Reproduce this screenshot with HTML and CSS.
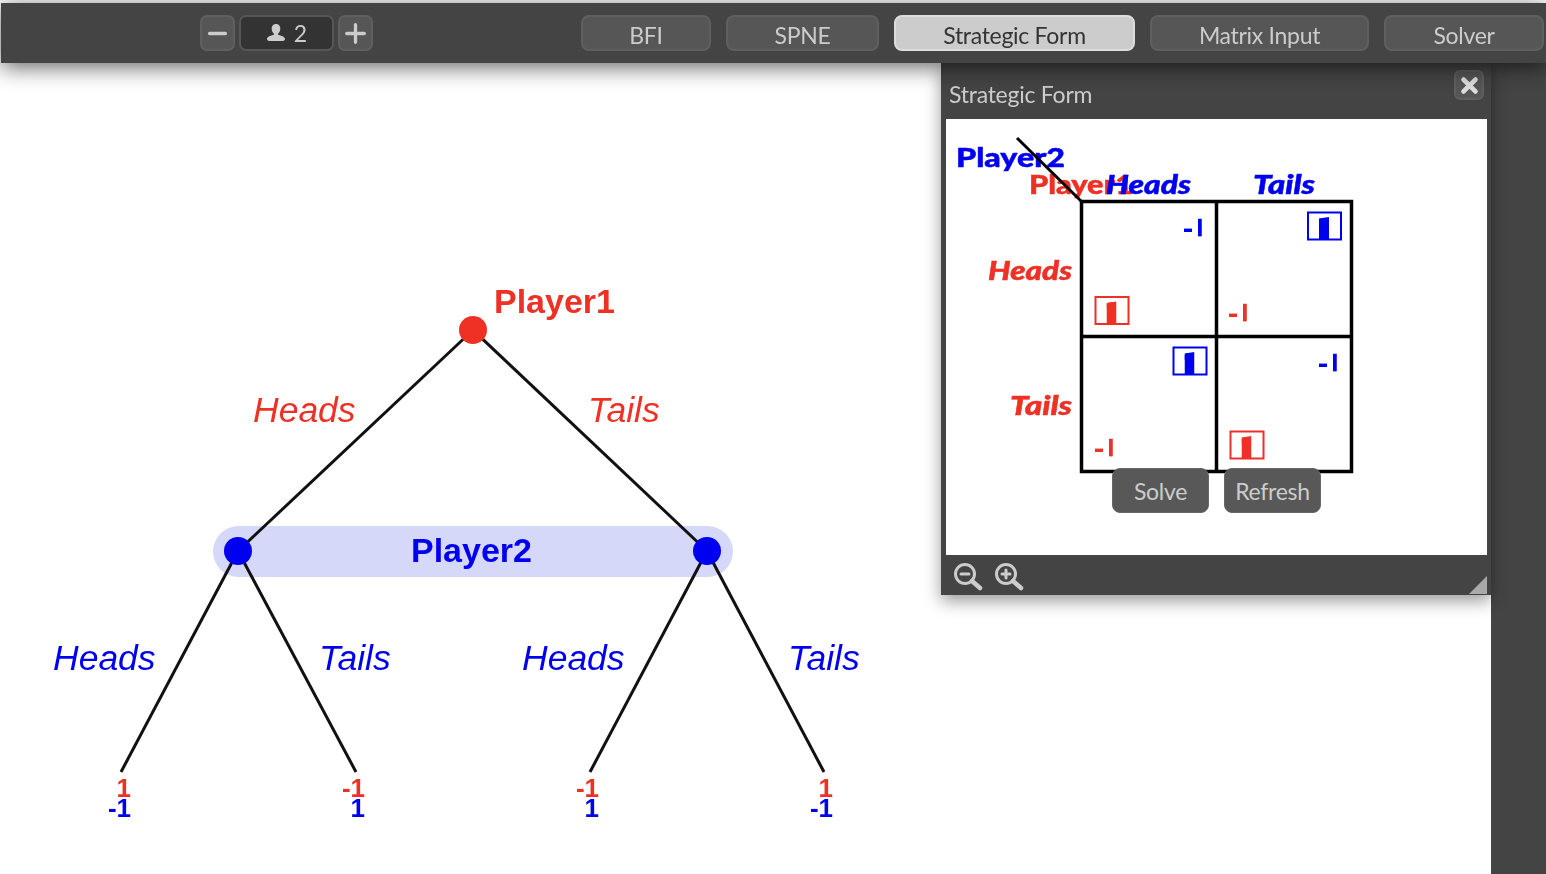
FILE: index.html
```html
<!DOCTYPE html>
<html lang="en">
<head>
<meta charset="utf-8">
<title>Strategic Form</title>
<link rel="stylesheet" href="styles.css">
</head>
<body>
<div class="app">
  <header class="toolbar">
    <div class="stepper">
      <button class="step"><svg class="step-icon" viewBox="0 0 24 24"><path d="M3 12h18" /></svg></button>
      <div class="count">
        <svg class="user-icon" viewBox="0 0 20 20"><path d="M10 1c3 0 4.300 2.300 4.300 4.700 0 2-.9 3.800-2.200 4.800v1.300c2.600.8 6.900 1.800 6.900 4.200 0 1.500-1.500 2-3 2H4c-1.500 0-3-.5-3-2 0-2.400 4.300-3.400 6.900-4.200v-1.300C6.600 9.500 5.700 7.700 5.700 5.700 5.700 3.300 7 1 10 1z"/></svg>
        <span>2</span>
      </div>
      <button class="step"><svg class="step-icon" viewBox="0 0 24 24"><path d="M2 12h20M12 2v20" /></svg></button>
    </div>
    <nav class="tabs">
      <button class="tab tab-bfi">BFI</button>
      <button class="tab tab-spne">SPNE</button>
      <button class="tab tab-form active">Strategic Form</button>
      <button class="tab tab-matrix">Matrix Input</button>
      <button class="tab tab-solver">Solver</button>
    </nav>
  </header>

  <main class="main">
    <section class="canvas">
      <svg class="tree" viewBox="0 63 1491 811">
        <rect class="info-set" x="213" y="526" width="520" height="51" rx="25.500"/>
        <g class="edges">
          <line x1="473" y1="330" x2="238" y2="551"/>
          <line x1="473" y1="330" x2="707" y2="551"/>
          <line x1="238" y1="551" x2="121" y2="772"/>
          <line x1="238" y1="551" x2="356" y2="772"/>
          <line x1="707" y1="551" x2="590" y2="772"/>
          <line x1="707" y1="551" x2="824" y2="772"/>
        </g>
        <circle class="fill-red" cx="473" cy="330" r="14"/>
        <circle class="fill-blue" cx="238" cy="551" r="14"/>
        <circle class="fill-blue" cx="707" cy="551" r="14"/>
        <text class="player fill-red" x="494" y="313">Player1</text>
        <text class="player fill-blue" x="411" y="562">Player2</text>
        <text class="move fill-red" x="253" y="421.500">Heads</text>
        <text class="move fill-red" x="588" y="421.500">Tails</text>
        <text class="move fill-blue" x="53" y="669.500">Heads</text>
        <text class="move fill-blue" x="319" y="669.500">Tails</text>
        <text class="move fill-blue" x="522" y="669.500">Heads</text>
        <text class="move fill-blue" x="788" y="669.500">Tails</text>
        <text class="payoff fill-red" x="131" y="797">1</text>
        <text class="payoff fill-blue" x="131" y="817">-1</text>
        <text class="payoff fill-red" x="365" y="797">-1</text>
        <text class="payoff fill-blue" x="365" y="817">1</text>
        <text class="payoff fill-red" x="599" y="797">-1</text>
        <text class="payoff fill-blue" x="599" y="817">1</text>
        <text class="payoff fill-red" x="833" y="797">1</text>
        <text class="payoff fill-blue" x="833" y="817">-1</text>
      </svg>
    </section>
    <aside class="sidebar"></aside>

    <section class="window">
      <div class="win-head">
        <h2 class="win-title">Strategic Form</h2>
        <button class="win-close"><svg viewBox="0 0 16 16"><path d="M3 3l10 10M13 3L3 13"/></svg></button>
      </div>
      <div class="win-body">
        <svg class="matrix" viewBox="946 119 541 436">
          <defs>
            <clipPath id="clip-pay"><rect x="0" y="-8" width="8" height="4"/><rect x="14" y="-18" width="4" height="18"/></clipPath>
            <clipPath id="clip-best"><polygon points="12,7 22,5.500 22,28 12,28"/></clipPath>
          </defs>
          <text class="m-player fill-blue stroke-blue" x="956" y="167" textLength="109" lengthAdjust="spacingAndGlyphs">Player2</text>
          <text class="m-player fill-red stroke-red" x="1029" y="194" textLength="104" lengthAdjust="spacingAndGlyphs">Player1</text>
          <g class="grid">
            <rect x="1081.500" y="201.500" width="270" height="270"/>
            <line x1="1216.500" y1="201" x2="1216.500" y2="472"/>
            <line x1="1081" y1="336.500" x2="1352" y2="336.500"/>
            <line class="diag" x1="1017" y1="138" x2="1081" y2="201"/>
          </g>
          <text class="m-move fill-blue stroke-blue" x="1106" y="194" textLength="85" lengthAdjust="spacingAndGlyphs">Heads</text>
          <text class="m-move fill-blue stroke-blue" x="1253" y="194" textLength="62" lengthAdjust="spacingAndGlyphs">Tails</text>
          <text class="m-move fill-red stroke-red" x="988" y="280" textLength="84" lengthAdjust="spacingAndGlyphs">Heads</text>
          <text class="m-move fill-red stroke-red" x="1010" y="415" textLength="62" lengthAdjust="spacingAndGlyphs">Tails</text>

          <g transform="translate(1184 236.500)"><text class="m-pay fill-blue stroke-blue" clip-path="url(#clip-pay)">-1</text></g>
          <g transform="translate(1229 321.500)"><text class="m-pay fill-red stroke-red" clip-path="url(#clip-pay)">-1</text></g>
          <g transform="translate(1095 456.500)"><text class="m-pay fill-red stroke-red" clip-path="url(#clip-pay)">-1</text></g>
          <g transform="translate(1319 371.500)"><text class="m-pay fill-blue stroke-blue" clip-path="url(#clip-pay)">-1</text></g>

          <g transform="translate(1307 211.500)"><rect class="box-blue" x="1" y="1" width="33" height="27"/><text class="m-best fill-blue stroke-blue" x="6" y="28" clip-path="url(#clip-best)">1</text></g>
          <g transform="translate(1094.500 296)"><rect class="box-red" x="1" y="1" width="33" height="27"/><text class="m-best fill-red stroke-red" x="6" y="28" clip-path="url(#clip-best)">1</text></g>
          <g transform="translate(1172.500 346.500)"><rect class="box-blue" x="1" y="1" width="33" height="27"/><text class="m-best fill-blue stroke-blue" x="6" y="28" clip-path="url(#clip-best)">1</text></g>
          <g transform="translate(1229.500 430.500)"><rect class="box-red" x="1" y="1" width="33" height="27"/><text class="m-best fill-red stroke-red" x="6" y="28" clip-path="url(#clip-best)">1</text></g>
        </svg>
        <button class="action action-solve">Solve</button>
        <button class="action action-refresh">Refresh</button>
      </div>
      <div class="win-foot">
        <svg class="zoom-icon" viewBox="0 0 30 30"><circle cx="12" cy="12" r="9.500"/><path class="zoom-mark" d="M8 12h8"/><path class="zoom-handle" d="M19 19l8 7"/></svg>
        <svg class="zoom-icon" viewBox="0 0 30 30"><circle cx="12" cy="12" r="9.500"/><path class="zoom-mark" d="M8 12h8M12 8v8"/><path class="zoom-handle" d="M19 19l8 7"/></svg>
        <div class="resize-grip"></div>
      </div>
    </section>
  </main>
</div>
</body>
</html>
```

FILE: styles.css
```css
* { box-sizing: border-box; }
html, body { margin: 0; height: 100%; background: #fff; overflow: hidden; }
.app { height: 874px; display: flex; flex-direction: column; padding-top: 3px; font-family: Lato, "Open Sans", sans-serif; filter: blur(.35px); }
button { font-family: inherit; padding: 0; cursor: pointer; }

.toolbar {
  height: 60px; margin-left: 1px; background: #444; display: flex; align-items: center;
  padding-left: 199px; position: relative; z-index: 3; flex: none;
  box-shadow: 0 4px 22px rgba(0,0,0,.62);
}
.stepper { display: flex; gap: 4px; }
.step {
  width: 35px; height: 36px; border: 2px solid #5f5f5f; border-radius: 7px; background: #565656;
  display: flex; align-items: center; justify-content: center;
}
.step-icon { width: 21px; height: 21px; fill: none; stroke: #ccc; stroke-width: 3.800; stroke-linecap: round; }
.count {
  width: 95px; height: 36px; border: 2px solid #565656; border-radius: 7px; background: #333;
  color: #ccc; display: flex; align-items: center; justify-content: center; gap: 8px; font-size: 23px;
}
.user-icon { width: 20px; height: 20px; fill: #ccc; }

.tabs { display: flex; gap: 15px; margin-left: 208px; }
.tab {
  height: 36px; border: 2px solid #5f5f5f; border-radius: 8px; background: #565656; color: #ccc;
  font-size: 23px; letter-spacing: -.3px; padding-top: 4px; line-height: 28px;
}
.tab.active { background: #ccc; color: #333; border-color: #ddd; }
.tab-bfi { width: 130px; }
.tab-spne { width: 153px; }
.tab-form { width: 241px; }
.tab-matrix { width: 219px; }
.tab-solver { width: 160px; }

.main { flex: 1; display: flex; position: relative; min-height: 0; }
.canvas { flex: 1; min-width: 0; }
.tree { display: block; width: 1491px; height: 811px; }
.sidebar { width: 55px; background: #444; }

.info-set { fill: #d6d8f9; }
.edges line { stroke: #111; stroke-width: 3; }
.fill-red { fill: #ee3124; }
.fill-blue { fill: #0000f0; }
.player { font: bold 34px "Liberation Sans", Arial, sans-serif; }
.move { font: italic 35.500px "Liberation Sans", Arial, sans-serif; }
.payoff { font: bold 26px "Liberation Sans", Arial, sans-serif; text-anchor: end; }

.window {
  position: absolute; left: 941px; top: 0; width: 550px; height: 532px; background: #444;
  box-shadow: 0 6px 16px rgba(0,0,0,.4); display: flex; flex-direction: column; z-index: 2;
  padding: 0 4px 0 5px;
}
.win-head { height: 56px; display: flex; align-items: flex-start; justify-content: space-between; flex: none; }
.win-title { margin: 17px 0 0 3px; font-size: 23px; letter-spacing: -.25px; line-height: 28px; font-weight: 400; color: #ccc; }
.win-close {
  width: 30px; height: 30px; margin: 7px 3px 0 0; border: 2px solid #5f5f5f; border-radius: 6px; background: #565656;
  display: flex; align-items: center; justify-content: center;
}
.win-close svg { width: 19px; height: 19px; fill: none; stroke: #ddd; stroke-width: 4; stroke-linecap: round; }
.win-body { height: 436px; background: #fff; position: relative; flex: none; }
.matrix { display: block; width: 541px; height: 436px; }
.grid rect, .grid line { fill: none; stroke: #000; stroke-width: 3.500; }
.grid .diag { stroke-width: 3; }
.m-player { font: 900 27px Lato, sans-serif; stroke-width: .5; }
.m-move { font: italic 900 27px Lato, sans-serif; stroke-width: .5; }
.m-pay { font: 500 25px "Open Sans", sans-serif; stroke-width: 2; }
.box-blue, .box-red { fill: #fff; stroke-width: 2; }
.box-blue { stroke: #0000f0; }
.box-red { stroke: #ee3124; }
.m-best { font: 700 30px "Open Sans", sans-serif; stroke-width: 12; }
.stroke-blue { stroke: #0000f0; }
.stroke-red { stroke: #ee3124; }
.action {
  position: absolute; top: 349px; width: 97px; height: 45px; border: 1px solid #666; border-radius: 8px;
  background: #585858; color: #ccc; font-size: 23px; letter-spacing: -.3px;
}
.action-solve { left: 166px; }
.action-refresh { left: 278px; }

.win-foot { flex: 1; display: flex; align-items: center; gap: 11px; padding: 3px 0 0 7px; position: relative; }
.zoom-icon { width: 30px; height: 30px; fill: none; stroke: #ccc; stroke-width: 3; stroke-linecap: round; }
.zoom-handle { stroke-width: 4.500; }
.resize-grip {
  position: absolute; right: 0; bottom: 1px; width: 18px; height: 18px; background: #aaa;
  clip-path: polygon(100% 0, 100% 100%, 0 100%);
}
```
